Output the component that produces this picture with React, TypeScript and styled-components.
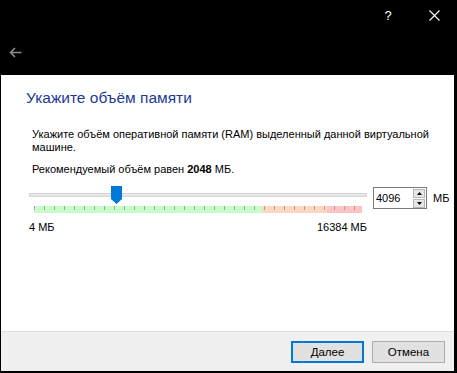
import { FC } from 'react';
import styled, { createGlobalStyle } from 'styled-components';

const GlobalStyle = createGlobalStyle`
    html, body {
        margin: 0;
        padding: 0;
        background: #000;
    }
    * {
        box-sizing: border-box;
    }
`;

const font = `"Liberation Sans", "Noto Sans", Arial, sans-serif`;

const Window = styled.div`
    width: 457px;
    height: 373px;
    background: #000;
    display: flex;
    flex-direction: column;
    font-family: ${font};
    overflow: hidden;
`;

const TitleBar = styled.div`
    height: 75px;
    display: flex;
    flex-direction: column;
`;

const CaptionRow = styled.div`
    height: 30px;
    display: flex;
    justify-content: flex-end;
`;

const CaptionButton = styled.div`
    width: 46px;
    height: 30px;
    display: flex;
    align-items: center;
    justify-content: center;
    color: #fff;
    font-size: 13px;
`;

const BackRow = styled.div`
    flex: 1;
    display: flex;
    align-items: center;
    padding: 0 0 0 9px;
`;

const Content = styled.div`
    height: 256px;
    margin: 0 3px 0 1px;
    background: #fff;
    padding: 13px 0 0 25px;
    display: flex;
    flex-direction: column;
`;

const Heading = styled.h1`
    margin: 0;
    font-family: ${font};
    font-weight: normal;
    font-size: 15.5px;
    line-height: 20px;
    color: #1c3a96;
`;

const Paragraph = styled.p<{ $top: number }>`
    margin: ${p => p.$top}px 0 0 6px;
    font-size: 11px;
    line-height: 13px;
    color: #000;
    width: 405px;
`;

const SliderRow = styled.div`
    margin: 10px 0 0 3px;
    display: flex;
    align-items: flex-start;
`;

const SliderColumn = styled.div`
    width: 338px;
    display: flex;
    flex-direction: column;
`;

const SliderBox = styled.div`
    position: relative;
    height: 18px;
    padding-top: 7px;
`;

const Track = styled.div`
    height: 4px;
    background: #e7e7e7;
    border: 1px solid #d6d6d6;
`;

const Thumb = styled.svg`
    position: absolute;
    top: 0;
`;

const TickBand = styled.div`
    margin: 2px 0 0 5px;
    width: 328px;
    height: 7px;
    background:
        repeating-linear-gradient(to right, #a3a3a3 0 1px, transparent 1px 10px) top left / 100% 4px no-repeat,
        linear-gradient(to right, #c8fcc8 0 69.5%, #ffd6bf 69.5% 89.3%, #ffc3c3 89.3% 100%);
`;

const Limits = styled.div`
    display: flex;
    justify-content: space-between;
    font-size: 11px;
    line-height: 15px;
    margin-top: 7px;
    color: #000;
`;

const SpinBox = styled.div`
    margin: 1px 0 0 6px;
    width: 54px;
    height: 22px;
    border: 1px solid #7a7a7a;
    display: flex;
    align-items: center;
    justify-content: space-between;
    padding: 0 1px 0 2px;
    background: #fff;
    font-size: 11px;
`;

const SpinButtons = styled.div`
    display: flex;
    flex-direction: column;
    gap: 1px;
`;

const SpinButton = styled.div`
    width: 12px;
    height: 9px;
    background: #e6e6e6;
    border: 1px solid #b4b4b4;
    display: flex;
    align-items: center;
    justify-content: center;
`;

const Unit = styled.span`
    margin: 5px 0 0 6px;
    font-size: 11px;
    line-height: 15px;
`;

const Footer = styled.div`
    height: 40px;
    margin: 0 3px 1px 1px;
    background: #f0f0f0;
    border-top: 1px solid #dfdfdf;
    display: flex;
    justify-content: flex-end;
    align-items: flex-start;
    gap: 8px;
    padding: 9px 9px 0 0;
`;

const Button = styled.button<{ $default?: boolean }>`
    width: 73px;
    height: 22px;
    font-family: ${font};
    font-size: 11.5px;
    color: #000;
    background: #e1e1e1;
    border: ${p => (p.$default ? '2px solid #0078d7' : '1px solid #adadad')};
    padding: 0;
`;

const Arrow: FC<{ up?: boolean }> = ({ up }) => (
    <svg width="5" height="3" viewBox="0 0 5 3">
        <polygon points={up ? '2.5,0 5,3 0,3' : '0,0 5,0 2.5,3'} fill="#000" />
    </svg>
);

export default function App() {
    const min = 4;
    const max = 16384;
    const value = 4096;
    const thumbLeft = ((value - min) / (max - min)) * (338 - 11);

    return (
        <>
            <GlobalStyle />
            <Window>
                <TitleBar>
                    <CaptionRow>
                        <CaptionButton>?</CaptionButton>
                        <CaptionButton>
                            <svg width="11" height="11" viewBox="0 0 11 11">
                                <path d="M0.5 0.5 L10.5 10.5 M10.5 0.5 L0.5 10.5" stroke="#fff" strokeWidth="1.1" />
                            </svg>
                        </CaptionButton>
                    </CaptionRow>
                    <BackRow>
                        <svg width="13" height="11" viewBox="0 0 13 11">
                            <path d="M12.5 5.5 H1.5 M6 1 L1.5 5.5 L6 10" stroke="#8c8c8c" strokeWidth="1.6" fill="none" />
                        </svg>
                    </BackRow>
                </TitleBar>
                <Content>
                    <Heading>Укажите объём памяти</Heading>
                    <Paragraph $top={20}>
                        Укажите объём оперативной памяти (RAM) выделенный данной виртуальной машине.
                    </Paragraph>
                    <Paragraph $top={9}>
                        Рекомендуемый объём равен <b>2048</b> МБ.
                    </Paragraph>
                    <SliderRow>
                        <SliderColumn>
                            <SliderBox>
                                <Track />
                                <Thumb width="11" height="18" viewBox="0 0 11 18" style={{ left: thumbLeft }}>
                                    <polygon points="0,0 11,0 11,13 5.5,18 0,13" fill="#0078d7" />
                                </Thumb>
                            </SliderBox>
                            <TickBand />
                            <Limits>
                                <span>4 МБ</span>
                                <span>16384 МБ</span>
                            </Limits>
                        </SliderColumn>
                        <SpinBox>
                            <span>4096</span>
                            <SpinButtons>
                                <SpinButton><Arrow up /></SpinButton>
                                <SpinButton><Arrow /></SpinButton>
                            </SpinButtons>
                        </SpinBox>
                        <Unit>МБ</Unit>
                    </SliderRow>
                </Content>
                <Footer>
                    <Button $default>Далее</Button>
                    <Button>Отмена</Button>
                </Footer>
            </Window>
        </>
    );
}
